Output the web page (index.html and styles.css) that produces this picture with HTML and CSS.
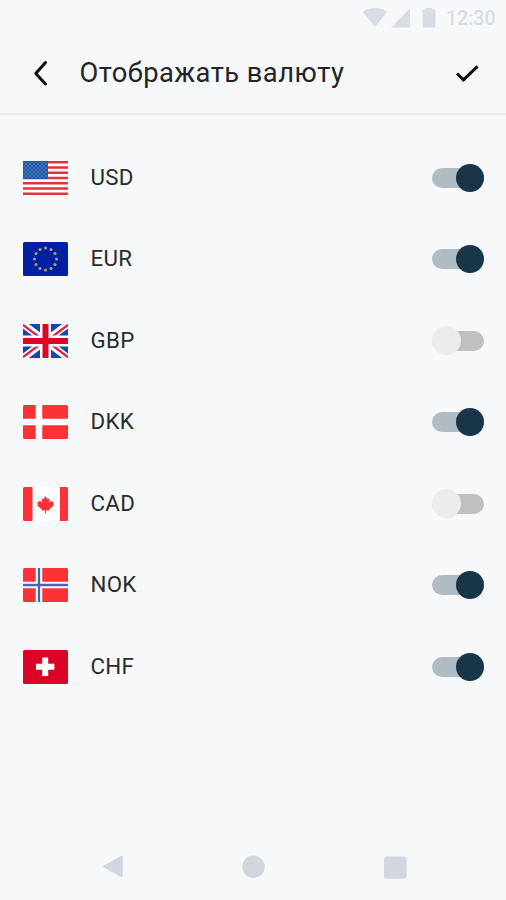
FILE: index.html
```html
<!DOCTYPE html>
<html lang="ru">
<head>
<meta charset="utf-8">
<title>Отображать валюту</title>
<link rel="stylesheet" href="styles.css">
</head>
<body>
<div class="screen">
  <div class="status">
    <svg class="status-icons" width="76" height="22" viewBox="0 0 76 22">
      <path d="M0.5 4.500C7 -0.2 18.500 -0.2 25 4.500L13 20Z"/>
      <path d="M48 1.500V20.500H29Z"/>
      <path d="M60.500 2.500H63.500V1H70V2.500H73.500V20.500H60.500Z"/>
    </svg>
    <span class="clock">12:30</span>
  </div>
  <header class="header">
    <svg class="back" width="20" height="30" viewBox="0 0 20 30"><path d="M15.500 4.500L5.800 15.500L15.500 26"/></svg>
    <h1 class="title">Отображать валюту</h1>
    <svg class="check" width="26" height="20" viewBox="0 0 26 20"><path d="M3 10.500L9.500 16.800L23.500 3.300"/></svg>
  </header>
  <main class="list">
    <div class="row">
      <svg class="flag" viewBox="0 0 45 34">
        <defs><pattern id="stars" width="4" height="4" patternUnits="userSpaceOnUse"><g class="star"><circle cx="1" cy="1" r=".8"/><circle cx="3" cy="3" r=".8"/></g></pattern></defs>
        <rect width="45" height="34" rx="1" fill="#fff"/>
        <path d="M0 1.300H45M0 6.530H45M0 11.760H45M0 17H45M0 22.230H45M0 27.460H45M0 32.700H45" stroke="#e13340" stroke-width="2.600"/>
        <rect width="25" height="18" fill="#1d57a5"/>
        <rect x=".5" y="1" width="24" height="16" fill="url(#stars)"/>
      </svg>
      <span class="code">USD</span><span class="toggle on"></span>
    </div>
    <div class="row">
      <svg class="flag" viewBox="0 0 45 34">
        <rect width="45" height="34" rx="1.500" fill="#0220a1"/>
        <g fill="#a5a47b"><circle cx="22.500" cy="6" r="1.500"/><circle cx="28" cy="7.500" r="1.500"/><circle cx="32" cy="11.500" r="1.500"/><circle cx="33.500" cy="17" r="1.500"/><circle cx="32" cy="22.500" r="1.500"/><circle cx="28" cy="26.500" r="1.500"/><circle cx="22.500" cy="28" r="1.500"/><circle cx="17" cy="26.500" r="1.500"/><circle cx="13" cy="22.500" r="1.500"/><circle cx="11.500" cy="17" r="1.500"/><circle cx="13" cy="11.500" r="1.500"/><circle cx="17" cy="7.500" r="1.500"/></g>
      </svg>
      <span class="code">EUR</span><span class="toggle on"></span>
    </div>
    <div class="row">
      <svg class="flag" viewBox="0 0 45 34">
        <rect width="45" height="34" rx="1" fill="#1548ac"/>
        <path d="M0 0L45 34M45 0L0 34" stroke="#fff" stroke-width="7"/>
        <path d="M0 .8L20 16M45 33.200L25 18M45 .8L25 16M0 33.200L20 18" stroke="#e0213b" stroke-width="2.200"/>
        <path d="M22.500 0V34M0 17H45" stroke="#fff" stroke-width="11"/>
        <path d="M22.500 0V34M0 17H45" stroke="#dc0628" stroke-width="6"/>
      </svg>
      <span class="code">GBP</span><span class="toggle"></span>
    </div>
    <div class="row">
      <svg class="flag" viewBox="0 0 45 34">
        <rect width="45" height="34" rx="1.500" fill="#fb3336"/>
        <path d="M16 0V34M0 17H45" stroke="#fff" stroke-width="6.500"/>
      </svg>
      <span class="code">DKK</span><span class="toggle on"></span>
    </div>
    <div class="row">
      <svg class="flag" viewBox="0 0 45 34">
        <rect width="45" height="34" rx="1.500" fill="#fff"/>
        <path d="M1.500 0H9.500V34H1.500Q0 34 0 32.500V1.500Q0 0 1.500 0M37 0H43.500Q45 0 45 1.500V32.500Q45 34 43.500 34H37Z" fill="#fb3336"/>
        <path d="M22.500 9L24.500 12.300L26.500 11.300L26 15.500L28.500 13.500L29 15L31 14.700L30 17.500L31 18.500L26 22.500L26.300 23.800L23 23.200V26.500H22V23.200L18.700 23.800L19 22.500L14 18.500L15 17.500L14 14.700L16 15L16.500 13.500L19 15.500L18.500 11.300L20.500 12.300Z" fill="#fb3336"/>
      </svg>
      <span class="code">CAD</span><span class="toggle"></span>
    </div>
    <div class="row">
      <svg class="flag" viewBox="0 0 45 34">
        <rect width="45" height="34" rx="1.500" fill="#fb3336"/>
        <path d="M16 0V34M0 17H45" stroke="#fff" stroke-width="6.500"/>
        <path d="M16 0V34M0 17H45" stroke="#3c68b8" stroke-width="2.300"/>
      </svg>
      <span class="code">NOK</span><span class="toggle on"></span>
    </div>
    <div class="row">
      <svg class="flag" viewBox="0 0 45 34">
        <rect width="45" height="34" rx="1.500" fill="#dc0325"/>
        <path d="M22.200 7.500V26M13 16.700H31.400" stroke="#fff" stroke-width="6"/>
      </svg>
      <span class="code">CHF</span><span class="toggle on"></span>
    </div>
  </main>
  <nav class="nav">
    <svg width="21" height="24" viewBox="0 0 21 24"><path d="M2.500 11.500L19.500 2V21Z" stroke-width="2.500"/></svg>
    <svg width="24" height="24" viewBox="0 0 24 24"><circle cx="12.500" cy="11.800" r="11.200"/></svg>
    <svg width="24" height="24" viewBox="0 0 24 24"><rect x="1" y="1.500" width="22.600" height="22.300" rx="2"/></svg>
  </nav>
</div>
</body>
</html>
```
FILE: styles.css
```css
* { box-sizing: border-box; }
body { margin: 0; background: #f6f8fa; font-family: Roboto, "Liberation Sans", sans-serif; }
svg { display: block; flex: none; }
.screen { width: 506px; height: 900px; display: flex; flex-direction: column; }
.status { height: 36px; padding: 0 11px 0 362px; display: flex; align-items: center; }
.status-icons { fill: #d8dce4; }
.clock { margin-left: 8px; padding-top: 1px; font-size: 19.5px; line-height: 22px; font-weight: 500; color: #d8dce4; }
.header { height: 79px; padding: 0 26px 3px 30px; display: flex; align-items: center; border-bottom: 2px solid #e9ecef; }
.back, .check { fill: none; stroke: #0b0d0f; stroke-width: 3; }
.back { stroke-linecap: round; stroke-linejoin: round; }
.title { margin: 0 auto 0 29.5px; font-size: 27.3px; line-height: 32px; font-weight: 400; letter-spacing: 0.46px; color: #222426; white-space: nowrap; }
.list { padding: 22px 22px 0 23px; flex: 1; }
.row { height: 81.5px; display: flex; align-items: center; }
.flag { width: 45px; height: 34px; }
.star { fill: #7199c5; }
.code { margin: 0 auto 2px 22.5px; font-size: 22.3px; line-height: 26px; letter-spacing: 0.3px; color: #292b2d; }
.toggle { width: 52px; height: 20px; border-radius: 10px; background: #bfc0c1; display: flex; align-items: center; }
.toggle::before { content: ""; width: 29px; height: 29px; border-radius: 50%; background: #ebecec; flex: none; }
.toggle.on { background: #b1bbc2; justify-content: flex-end; }
.toggle.on::before { width: 28px; height: 28px; background: #19354a; }
.nav { height: 66px; padding: 0 99px 0 102px; display: flex; align-items: center; justify-content: space-between; fill: #d1d6df; stroke-linejoin: round; }
.nav path { stroke: #d1d6df; }
```
